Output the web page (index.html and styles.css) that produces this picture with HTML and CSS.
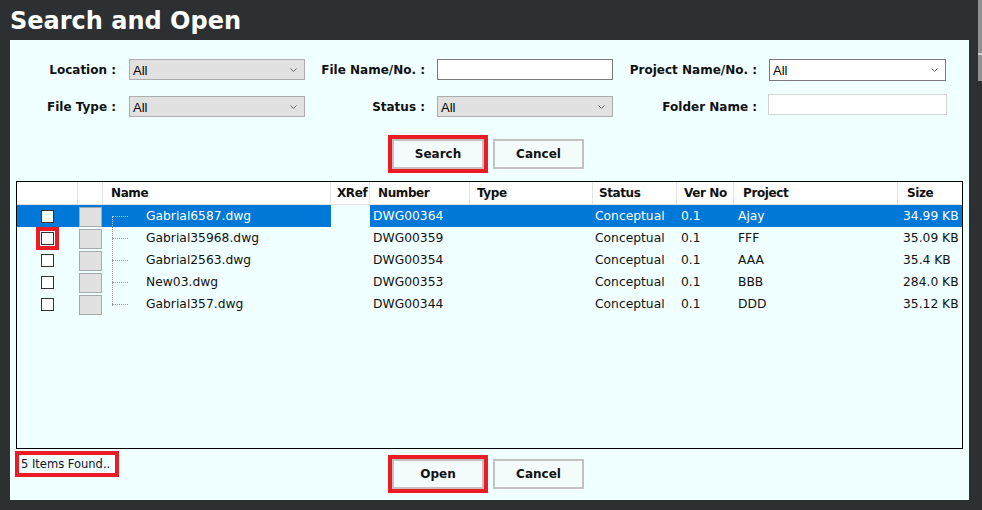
FILE: index.html
```html
<!DOCTYPE html>
<html lang="en">
<head>
<meta charset="utf-8">
<title>Search and Open</title>
<link rel="stylesheet" href="styles.css">
</head>
<body>
<div class="titlebar">Search and Open</div>
<div class="panel">
  <div class="form">
    <label class="lbl lbl-first">Location :</label>
    <div class="select"><span>All</span><svg class="chev" width="7" height="4" viewBox="0 0 7 4"><polyline points="0.5,0.5 3.5,3.5 6.5,0.5"/></svg></div>
    <label class="lbl">File Name/No. :</label>
    <div class="textbox"></div>
    <label class="lbl">Project Name/No. :</label>
    <div class="select select-white"><span>All</span><svg class="chev" width="7" height="4" viewBox="0 0 7 4"><polyline points="0.5,0.5 3.5,3.5 6.5,0.5"/></svg></div>

    <label class="lbl lbl-first">File Type :</label>
    <div class="select"><span>All</span><svg class="chev" width="7" height="4" viewBox="0 0 7 4"><polyline points="0.5,0.5 3.5,3.5 6.5,0.5"/></svg></div>
    <label class="lbl">Status :</label>
    <div class="select"><span>All</span><svg class="chev" width="7" height="4" viewBox="0 0 7 4"><polyline points="0.5,0.5 3.5,3.5 6.5,0.5"/></svg></div>
    <label class="lbl">Folder Name :</label>
    <div class="textbox textbox-light folder"></div>
  </div>

  <div class="actions actions-top">
    <button class="btn hl">Search</button>
    <button class="btn btn-cancel">Cancel</button>
  </div>

  <div class="gridbox">
    <div class="row head">
      <div class="hc"></div>
      <div class="hc"></div>
      <div class="hc">Name</div>
      <div class="hc hc-x">XRef</div>
      <div class="hc">Number</div>
      <div class="hc hc-t">Type</div>
      <div class="hc hc-s">Status</div>
      <div class="hc hc-t">Ver No</div>
      <div class="hc hc-p">Project</div>
      <div class="hc hc-p last">Size</div>
    </div>

    <div class="row selected">
      <div class="c cb"><span class="check"></span></div>
      <div class="c ic"><span class="thumb"></span></div>
      <div class="c name first">Gabrial6587.dwg</div>
      <div class="c xref"></div>
      <div class="c num">DWG00364</div>
      <div class="c"></div>
      <div class="c st">Conceptual</div>
      <div class="c">0.1</div>
      <div class="c">Ajay</div>
      <div class="c sz">34.99 KB</div>
    </div>
    <div class="row">
      <div class="c cb"><span class="check check-hl"></span></div>
      <div class="c ic"><span class="thumb"></span></div>
      <div class="c name">Gabrial35968.dwg</div>
      <div class="c xref"></div>
      <div class="c num">DWG00359</div>
      <div class="c"></div>
      <div class="c st">Conceptual</div>
      <div class="c">0.1</div>
      <div class="c">FFF</div>
      <div class="c sz">35.09 KB</div>
    </div>
    <div class="row">
      <div class="c cb"><span class="check"></span></div>
      <div class="c ic"><span class="thumb"></span></div>
      <div class="c name">Gabrial2563.dwg</div>
      <div class="c xref"></div>
      <div class="c num">DWG00354</div>
      <div class="c"></div>
      <div class="c st">Conceptual</div>
      <div class="c">0.1</div>
      <div class="c">AAA</div>
      <div class="c sz">35.4 KB</div>
    </div>
    <div class="row">
      <div class="c cb"><span class="check"></span></div>
      <div class="c ic"><span class="thumb"></span></div>
      <div class="c name">New03.dwg</div>
      <div class="c xref"></div>
      <div class="c num">DWG00353</div>
      <div class="c"></div>
      <div class="c st">Conceptual</div>
      <div class="c">0.1</div>
      <div class="c">BBB</div>
      <div class="c sz">284.0 KB</div>
    </div>
    <div class="row">
      <div class="c cb"><span class="check"></span></div>
      <div class="c ic"><span class="thumb"></span></div>
      <div class="c name lastrow">Gabrial357.dwg</div>
      <div class="c xref"></div>
      <div class="c num">DWG00344</div>
      <div class="c"></div>
      <div class="c st">Conceptual</div>
      <div class="c">0.1</div>
      <div class="c">DDD</div>
      <div class="c sz">35.12 KB</div>
    </div>
  </div>

  <div class="footer">
    <div class="count">5 Items Found..</div>
    <div class="actions">
      <button class="btn hl">Open</button>
      <button class="btn btn-cancel">Cancel</button>
    </div>
    <div></div>
  </div>
</div>
<div class="scrollbar"></div>
</body>
</html>
```

FILE: styles.css
```css
html, body {
  margin: 0;
  padding: 0;
}
body {
  background: #2c3032;
  width: 982px;
  height: 510px;
  overflow: hidden;
  position: relative;
  font-family: "DejaVu Sans", Verdana, sans-serif;
  color: #111;
}

.titlebar {
  height: 38px;
  padding: 2px 0 0 10px;
  color: #fff;
  font-weight: bold;
  font-size: 24px;
  line-height: 38px;
}

.panel {
  margin-left: 10px;
  width: 959px;
  height: 460px;
  background: #f0ffff;
  display: flex;
  flex-direction: column;
}

/* search form */
.form {
  display: grid;
  grid-template-columns: 119px 176px 132px 176px 156px 177px;
  grid-auto-rows: 21px;
  row-gap: 16px;
  padding-top: 19px;
  align-items: center;
}
.lbl {
  text-align: right;
  padding-right: 12px;
  font-weight: bold;
  font-size: 12px;
  white-space: nowrap;
  color: #111;
}
.lbl-first {
  padding-right: 13px;
}
.select {
  height: 21px;
  box-sizing: border-box;
  border: 1px solid #adadad;
  background: #e1e1e1;
  display: flex;
  align-items: center;
  justify-content: space-between;
  padding: 1px 7px 0 3px;
  font-family: "Liberation Sans", Arial, sans-serif;
  font-size: 13px;
  color: #000;
}
.select-white {
  background: #fff;
  border-color: #7a7a7a;
  height: 22px;
}
.chev polyline {
  fill: none;
  stroke: #666;
  stroke-width: 1;
}
.textbox {
  height: 21px;
  box-sizing: border-box;
  border: 1px solid #7a7a7a;
  background: #fff;
}
.textbox-light {
  border-color: #d3d3d3;
}
.folder {
  align-self: start;
  margin: -2px 0 0 -1px;
  width: 179px;
}

/* buttons */
.actions {
  display: flex;
  justify-content: center;
  align-items: flex-start;
  gap: 9px;
}
.actions-top {
  margin-top: 22px;
  padding-right: 3px;
}
.btn {
  width: 92px;
  height: 30px;
  box-sizing: border-box;
  border: 2px solid #c2c2c2;
  background: #f4fbfb;
  font-family: "DejaVu Sans", Verdana, sans-serif;
  font-weight: bold;
  font-size: 12px;
  color: #111;
  padding: 0;
  cursor: pointer;
}
.btn-cancel {
  width: 91px;
}
.hl {
  outline: 4px solid #ed1c24;
  outline-offset: 0;
}

/* results grid */
.gridbox {
  margin: 12px 0 0 6px;
  width: 947px;
  height: 268px;
  box-sizing: border-box;
  border: 1px solid #000;
  background: #f0ffff;
}
.row {
  display: grid;
  grid-template-columns: 61px 25px 228px 39px 100px 123px 84px 57px 164px 64px;
  height: 22px;
  font-size: 12.3px;
  line-height: 23px;
  color: #111;
}
.row.head {
  height: 23px;
  background: #fff;
  border-bottom: 1px solid #e3e3e3;
  box-sizing: border-box;
  line-height: 23px;
}
.hc {
  font-weight: bold;
  font-size: 12px;
  letter-spacing: -0.4px;
  padding-left: 8px;
  border-right: 1px solid #e3e3e3;
  white-space: nowrap;
  overflow: hidden;
  color: #111;
}
.hc-x { padding-left: 6px; }
.hc-t { padding-left: 7px; }
.hc-s { padding-left: 6px; }
.hc-p { padding-left: 9px; }
.hc.last { border-right: none; }

.c {
  padding-left: 4px;
  white-space: nowrap;
  overflow: hidden;
}
.c.num { padding-left: 3px; }
.c.st { padding-left: 2px; }
.c.sz { padding-left: 5px; }
.c.cb, .c.ic {
  padding: 0;
  display: flex;
  align-items: center;
  overflow: visible;
}
.c.cb { justify-content: center; }
.check {
  width: 13px;
  height: 13px;
  box-sizing: border-box;
  border: 1px solid #333;
  background: #fff;
}
.check-hl {
  outline: 4px solid #ed1c24;
  outline-offset: 1px;
}
.thumb {
  margin-left: 1px;
  width: 23px;
  height: 20px;
  box-sizing: border-box;
  border: 1px solid #a9a9a9;
  background: #e1e1e1;
}

.c.name {
  position: relative;
  padding-left: 43px;
  overflow: visible;
}
.c.name::before {
  content: "";
  position: absolute;
  left: 9px;
  top: 11px;
  width: 16px;
  border-top: 1px dotted #9a9a9a;
}
.c.name::after {
  content: "";
  position: absolute;
  left: 9px;
  top: 0;
  bottom: 0;
  border-left: 1px dotted #9a9a9a;
}
.c.name.first::after { top: 11px; }
.c.name.lastrow::after { bottom: 10px; }

.row.selected {
  background: #0078d7;
  color: #fff;
}
.row.selected .xref {
  background: #f0ffff;
}
.row.selected .c.name::before,
.row.selected .c.name::after {
  border-color: #b8c8d8;
}

/* footer */
.footer {
  margin-top: 2px;
  display: grid;
  grid-template-columns: 1fr auto 1fr;
  padding-right: 3px;
  align-items: start;
}
.footer .actions {
  margin-top: 8px;
}
.count {
  justify-self: start;
  margin-left: 5px;
  width: 104px;
  height: 26px;
  box-sizing: border-box;
  border: 4px solid #ed1c24;
  padding-left: 2px;
  font-size: 11.5px;
  line-height: 18px;
  color: #10102a;
  white-space: nowrap;
  overflow: hidden;
}

.scrollbar {
  position: absolute;
  left: 978px;
  top: 0;
  width: 4px;
  height: 81px;
  background: linear-gradient(#8e9293 0 53px, #cfd2d3 53px 55px, #8e9293 55px);
}
```
